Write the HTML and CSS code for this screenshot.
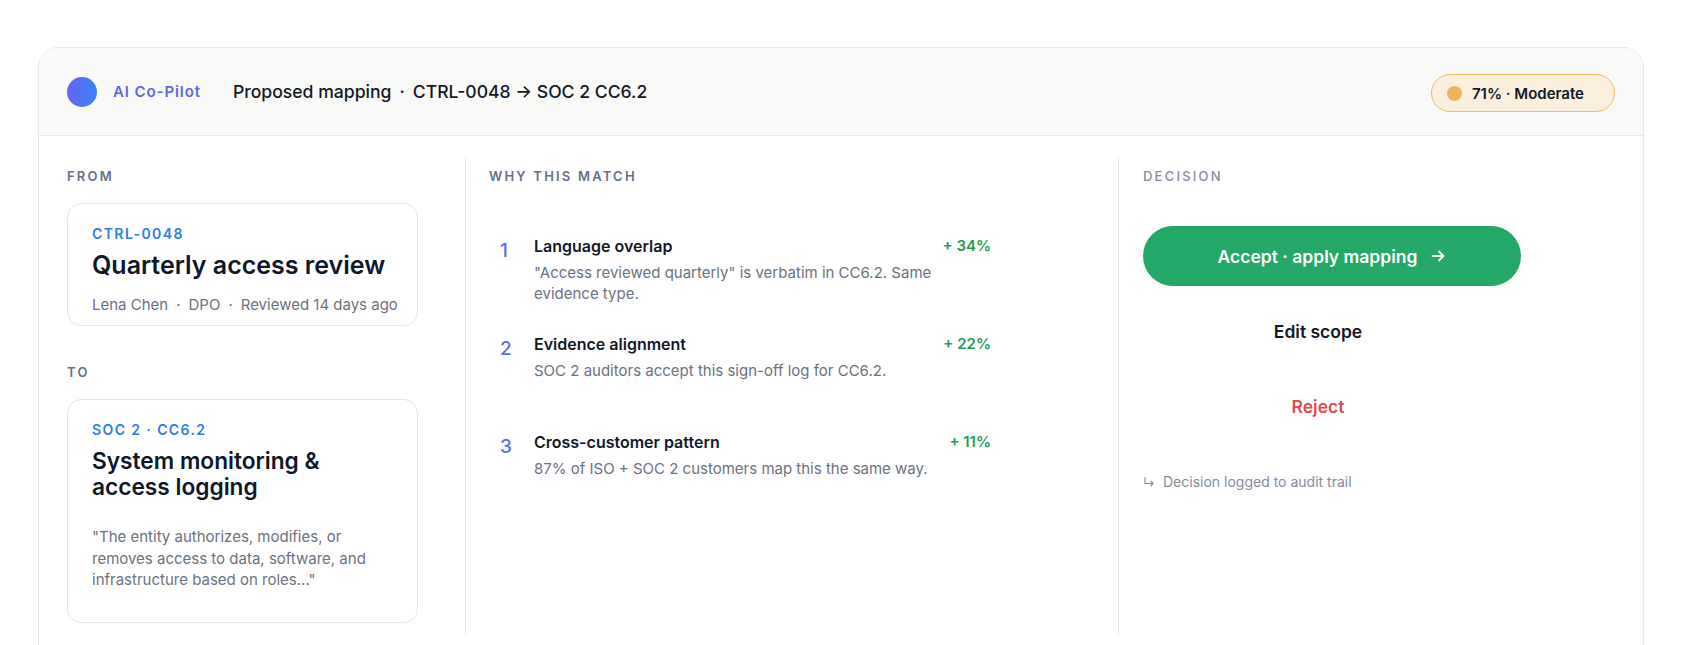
FILE: index.html
```html
<!DOCTYPE html>
<html lang="en">
<head>
  <meta charset="UTF-8" />
  <title>AI Co-Pilot · Proposed mapping</title>
  <link rel="stylesheet" href="styles.css">
</head>
<body>

  <div class="page">
    <div class="copilot-card">

      <!-- Cabeçalho -->
      <div class="copilot-header">
        <span class="avatar"></span>
        <span class="brand">AI Co-Pilot</span>
        <span class="header-title">Proposed mapping<span class="dot">·</span>CTRL-0048 → SOC 2 CC6.2</span>
        <span class="confidence"><span class="confidence-dot"></span>71% · Moderate</span>
      </div>

      <div class="copilot-body">

        <!-- From / To -->
        <div class="col col-controls">
          <div class="section-label">From</div>
          <div class="control-card">
            <div class="control-code">CTRL-0048</div>
            <div class="control-title">Quarterly access review</div>
            <div class="control-meta">Lena Chen<span class="dot">·</span>DPO<span class="dot">·</span>Reviewed 14 days ago</div>
          </div>

          <div class="section-label label-to">To</div>
          <div class="control-card control-card-target">
            <div class="control-code">SOC 2 · CC6.2</div>
            <div class="control-title">System monitoring &amp; access logging</div>
            <div class="control-quote">"The entity authorizes, modifies, or removes access to data, software, and infrastructure based on roles..."</div>
          </div>
        </div>

        <!-- Why this match -->
        <div class="col col-reasons">
          <div class="section-label">Why this match</div>
          <div class="reason-list">
            <div class="reason">
              <div class="reason-num">1</div>
              <div class="reason-text">
                <div class="reason-title">Language overlap</div>
                <div class="reason-desc">"Access reviewed quarterly" is verbatim in CC6.2. Same evidence type.</div>
              </div>
              <div class="reason-gain">+ 34%</div>
            </div>
            <div class="reason">
              <div class="reason-num">2</div>
              <div class="reason-text">
                <div class="reason-title">Evidence alignment</div>
                <div class="reason-desc">SOC 2 auditors accept this sign-off log for CC6.2.</div>
              </div>
              <div class="reason-gain">+ 22%</div>
            </div>
            <div class="reason">
              <div class="reason-num">3</div>
              <div class="reason-text">
                <div class="reason-title">Cross-customer pattern</div>
                <div class="reason-desc">87% of ISO + SOC 2 customers map this the same way.</div>
              </div>
              <div class="reason-gain">+ 11%</div>
            </div>
          </div>
        </div>

        <!-- Decision -->
        <div class="col col-decision">
          <div class="section-label section-label-light">Decision</div>
          <div class="decision-actions">
            <button class="btn btn-accept">Accept · apply mapping
              <svg width="16" height="16" viewBox="0 0 16 16" fill="none" stroke="currentColor" stroke-width="1.8" stroke-linecap="round" stroke-linejoin="round"><path d="M2.5 8h11M9 3.5 13.5 8 9 12.5"/></svg>
            </button>
            <button class="btn btn-ghost">Edit scope</button>
            <button class="btn btn-reject">Reject</button>
          </div>
          <div class="audit-note">
            <svg width="12" height="12" viewBox="0 0 12 12" fill="none" stroke="currentColor" stroke-width="1.1" stroke-linecap="round" stroke-linejoin="round"><path d="M2 1.5v6h8M7.8 5.2 10 7.5 7.8 9.8"/></svg>
            Decision logged to audit trail
          </div>
        </div>

      </div>
    </div>
  </div>

</body>
</html>
```

FILE: styles.css
```css
body {
  margin: 0;
  background-color: #fff;
  color: #111827;
  font-family: Inter, "Noto Sans", sans-serif;
}

.page {
  padding: 47px 56px 0 38px;
}

.copilot-card {
  border: 1px solid #e7e8ec;
  border-radius: 20px;
  background: #fff;
  overflow: hidden;
}

/* cabeçalho */
.copilot-header {
  display: flex;
  align-items: center;
  height: 87px;
  padding: 0 28px;
  background: #f9f9f7;
  border-bottom: 1px solid #e7e8ec;
}

.avatar {
  width: 30px;
  height: 30px;
  border-radius: 50%;
  background: linear-gradient(90deg, #6366f1, #3b82f6);
}

.brand {
  margin-left: 16px;
  font-size: 15px;
  font-weight: 600;
  letter-spacing: 0.06em;
  color: #5d66ef;
}

.header-title {
  margin-left: 32px;
  font-size: 17.6px;
  font-weight: 500;
  color: #111827;
}

.dot {
  margin: 0 8px;
}

.confidence {
  margin-left: auto;
  margin-top: 3px;
  display: flex;
  align-items: center;
  gap: 10px;
  height: 36px;
  padding: 0 30px 0 15px;
  border: 1px solid #f0ba5e;
  border-radius: 999px;
  background: #fbf0dd;
  font-size: 15px;
  font-weight: 600;
  color: #111827;
}

.confidence-dot {
  width: 15px;
  height: 15px;
  border-radius: 50%;
  background: #efb45b;
}

/* corpo */
.copilot-body {
  display: flex;
  padding: 22px 28px 40px;
}

.col {
  padding: 10px 0 11px;
  box-sizing: border-box;
}

.col-controls {
  width: 398px;
  padding-right: 47px;
}

.col-reasons {
  width: 653px;
  padding-left: 23px;
  border-left: 1px solid #e7e8ec;
}

.col-decision {
  flex: 1;
  padding-left: 24px;
  border-left: 1px solid #e7e8ec;
}

.section-label {
  font-size: 13px;
  line-height: 16px;
  font-weight: 600;
  letter-spacing: 0.17em;
  text-transform: uppercase;
  color: #667085;
}

.section-label-light {
  font-weight: 500;
  color: #878c9d;
}

.label-to {
  margin-top: 38px;
}

.control-card {
  margin-top: 19px;
  padding: 21px 12px 9px 24px;
  border: 1px solid #e5e7eb;
  border-radius: 14px;
}

.control-card-target {
  padding: 21px 32px 31px 24px;
}

.control-code {
  font-size: 14px;
  line-height: 18px;
  font-weight: 600;
  letter-spacing: 0.1em;
  color: #2b7de9;
}

.control-title {
  margin-top: 9px;
  font-size: 25px;
  line-height: 26px;
  font-weight: 600;
  color: #0f172a;
}

.control-card-target .control-title {
  font-size: 22.7px;
}

.control-meta {
  margin-top: 16px;
  font-size: 15px;
  line-height: 22px;
  color: #6b7280;
  white-space: nowrap;
}

.control-quote {
  margin-top: 26px;
  font-size: 15px;
  line-height: 21.5px;
  color: #6b7280;
}

/* motivos */
.reason-list {
  margin-top: 51px;
  padding-left: 11px;
}

.reason {
  display: flex;
  width: 491px;
  min-height: 98px;
}

.reason-num {
  flex: none;
  width: 34px;
  font-size: 19px;
  line-height: 32px;
  font-weight: 500;
  color: #6366f1;
}

.reason-text {
  flex: 1;
}

.reason-title {
  font-size: 16px;
  line-height: 22px;
  font-weight: 600;
  color: #111827;
}

.reason-desc {
  margin-top: 5px;
  font-size: 15px;
  line-height: 21px;
  color: #6b7280;
}

.reason-gain {
  flex: none;
  width: 56px;
  text-align: right;
  font-size: 15px;
  line-height: 22px;
  font-weight: 600;
  color: #1f9d57;
}

/* decisão */
.decision-actions {
  margin-top: 42px;
  width: 378px;
  display: flex;
  flex-direction: column;
  align-items: flex-start;
  gap: 15px;
}

.btn {
  display: flex;
  align-items: center;
  justify-content: center;
  width: 350px;
  height: 60px;
  border: none;
  border-radius: 30px;
  background: transparent;
  font-family: inherit;
  font-size: 17.5px;
  font-weight: 600;
  cursor: pointer;
}

.btn-accept {
  width: 378px;
  gap: 13px;
  background: #24a867;
  color: #fff;
}

.btn-ghost {
  color: #111827;
}

.btn-reject {
  color: #e5484d;
}

.audit-note {
  margin-top: 37px;
  display: flex;
  align-items: center;
  gap: 8px;
  font-size: 14px;
  line-height: 18px;
  color: #858b9c;
}
```
